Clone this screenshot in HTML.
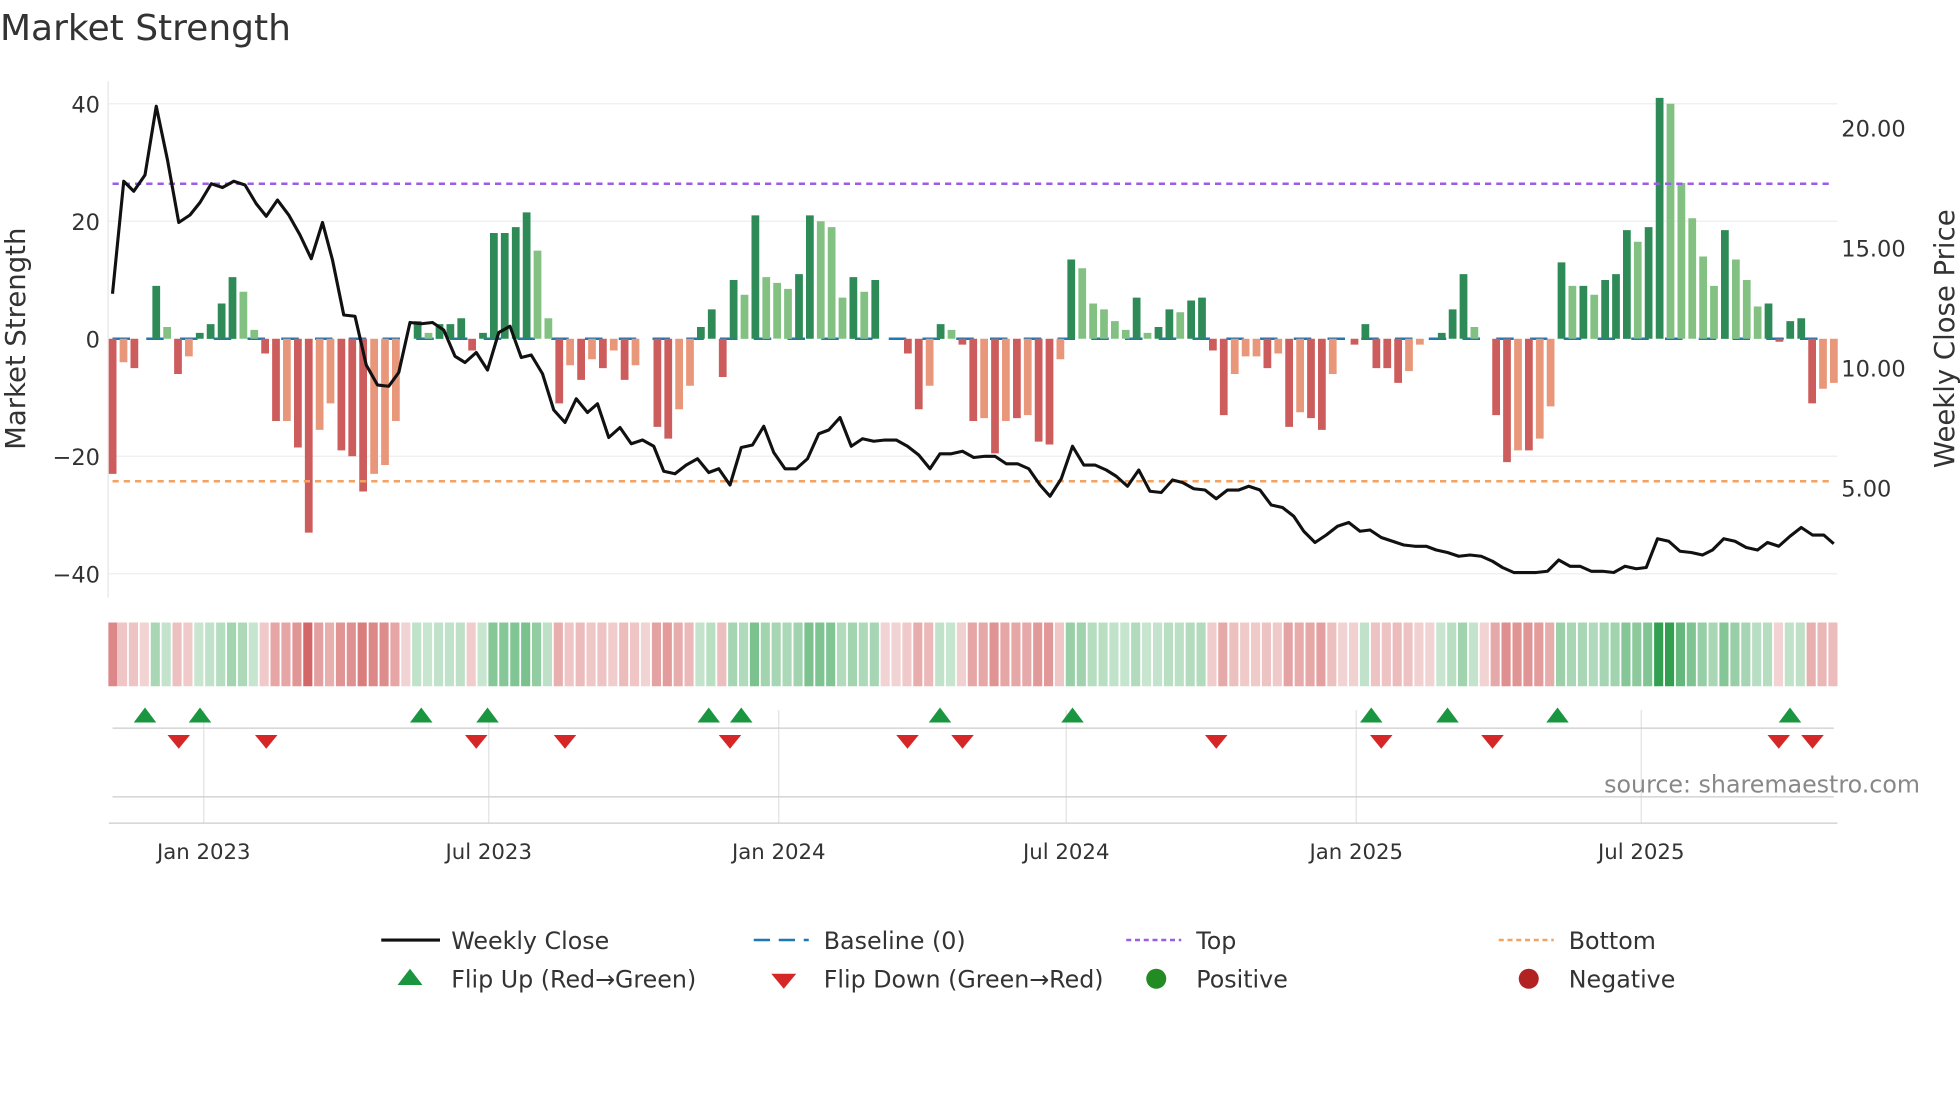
<!DOCTYPE html>
<html><head><meta charset="utf-8"><style>
html,body{margin:0;padding:0;background:#fff;overflow:hidden}
svg{display:block;font-family:"DejaVu Sans","Liberation Sans",sans-serif}
</style></head><body>
<svg id="s" width="1960" height="1102" viewBox="0 0 1568 881.6" xmlns="http://www.w3.org/2000/svg">
<text x="0" y="32" font-size="28.8" fill="#333">Market Strength</text>
<g stroke="#eceef2" stroke-width="1">
<line x1="87" y1="83" x2="1470" y2="83"/><line x1="87" y1="177" x2="1470" y2="177"/>
<line x1="87" y1="365" x2="1470" y2="365"/><line x1="87" y1="459" x2="1470" y2="459"/>
</g>
<line x1="86.5" y1="65" x2="86.5" y2="478" stroke="#e6e6e6"/>
<g font-size="18" fill="#333" text-anchor="end">
<text x="80" y="90">40</text><text x="80" y="184">20</text><text x="80" y="278">0</text>
<text x="80" y="372">−20</text><text x="80" y="466">−40</text>
</g>
<g font-size="18" fill="#333">
<text x="1473" y="109">20.00</text><text x="1473" y="205">15.00</text>
<text x="1473" y="301">10.00</text><text x="1473" y="397">5.00</text>
</g>
<text transform="translate(20,271) rotate(-90)" font-size="22" fill="#333" text-anchor="middle">Market Strength</text>
<text transform="translate(1563,271) rotate(-90)" font-size="22" fill="#333" text-anchor="middle">Weekly Close Price</text>
<line x1="90" y1="271" x2="1467" y2="271" stroke="#1f77b4" stroke-width="2" stroke-dasharray="14 13"/>
<g id="bars"></g>
<line x1="90" y1="147" x2="1467" y2="147" stroke="#9b5de5" stroke-width="2" stroke-dasharray="5 4"/>
<line x1="90" y1="385" x2="1467" y2="385" stroke="#f4a261" stroke-width="2" stroke-dasharray="5 4"/>
<polyline id="price" fill="none" stroke="#111" stroke-width="2.5" stroke-linejoin="round"/>
<g id="heat"></g>
<g stroke="#e3e3e3" stroke-width="1">
<line x1="163" y1="568" x2="163" y2="658"/><line x1="391" y1="568" x2="391" y2="658"/>
<line x1="623" y1="568" x2="623" y2="658"/><line x1="853" y1="568" x2="853" y2="658"/>
<line x1="1085" y1="568" x2="1085" y2="658"/><line x1="1313" y1="568" x2="1313" y2="658"/>
</g>
<line x1="90" y1="582.5" x2="1467" y2="582.5" stroke="#ccc"/>
<line x1="90" y1="637.5" x2="1467" y2="637.5" stroke="#ccc"/>
<line x1="87" y1="658.5" x2="1470" y2="658.5" stroke="#ccc"/>
<g id="marks"></g>
<text x="1536" y="634" font-size="19" fill="#888" text-anchor="end">source: sharemaestro.com</text>
<g font-size="17" fill="#333" text-anchor="middle">
<text x="163" y="687">Jan 2023</text><text x="391" y="687">Jul 2023</text>
<text x="623" y="687">Jan 2024</text><text x="853" y="687">Jul 2024</text>
<text x="1085" y="687">Jan 2025</text><text x="1313" y="687">Jul 2025</text>
</g>
<g font-size="19" fill="#333">
<line x1="305" y1="752" x2="352" y2="752" stroke="#111" stroke-width="2.5"/>
<text x="361" y="759">Weekly Close</text>
<line x1="603" y1="752" x2="647" y2="752" stroke="#1f77b4" stroke-width="2" stroke-dasharray="13 7"/>
<text x="659" y="759">Baseline (0)</text>
<line x1="901" y1="752" x2="945" y2="752" stroke="#9b5de5" stroke-width="2" stroke-dasharray="4 3"/>
<text x="957" y="759">Top</text>
<line x1="1199" y1="752" x2="1243" y2="752" stroke="#f4a261" stroke-width="2" stroke-dasharray="4 3"/>
<text x="1255" y="759">Bottom</text>
<polygon points="328,775 338,788 318,788" fill="#1a9641"/>
<text x="361" y="790">Flip Up (Red→Green)</text>
<polygon points="617,779 637,779 627,791" fill="#d62728"/>
<text x="659" y="790">Flip Down (Green→Red)</text>
<circle cx="925" cy="783" r="8" fill="#228b22"/>
<text x="957" y="790">Positive</text>
<circle cx="1223" cy="783" r="8" fill="#b22222"/>
<text x="1255" y="790">Negative</text>
</g>
</svg>
<script>
var D="-23 -4l -5 0 9 2l -6 -3l 1 2.5 6 10.5 8l 1.5l -2.5 -14 -14l -18.5 -33 -15.5l -11l -19 -20 -26 -23l -21.5l -14l 0 3 1l 2.5 2.5 3.5 -2 1 18 18 19 21.5 15l 3.5l -11 -4.5l -7 -3.5l -5 -2l -7 -4.5l 0 -15 -17 -12l -8l 2 5 -6.5 10 7.5l 21 10.5l 9.5l 8.5l 11 21 20l 19l 7l 10.5 8l 10 0 0 -2.5 -12 -8l 2.5 1.5l -1 -14 -13.5l -19.5 -14l -13.5 -13l -17.5 -18 -3.5l 13.5 12l 6l 5l 3l 1.5l 7 1l 2 5 4.5l 6.5 7 -2 -13 -6l -3l -3l -5 -2.5l -15 -12.5l -13.5 -15.5 -6l 0 -1 2.5 -5 -5 -7.5 -5.5l -1l 0 1 5 11 2l 0 -13 -21 -19l -19 -17l -11.5l 13 9l 9 7.5l 10 11 18.5 16.5l 19 41 40l 26.5l 20.5l 14l 9l 18.5 13.5l 10l 5.5l 6 -0.5 3 3.5 -11 -8.5l -7.5l".split(" ");
var n=D.length,sp=(1467-90)/(n-1),b="",h="";
for(var i=0;i<n;i++){var s=D[i],l=s.indexOf("l")>=0,v=parseFloat(s),x=90+i*sp;
 if(v!==0){var y=v>0?271-v*4.7:271,ht=Math.abs(v)*4.7;
  var c=v>0?(l?"#82c182":"#2e8b57"):(l?"#e9977a":"#cd5c5c");
  b+='<rect x="'+(x-3).toFixed(1)+'" y="'+y.toFixed(1)+'" width="6.2" height="'+Math.max(ht,1.5).toFixed(1)+'" fill="'+c+'"/>';}
 var a=Math.min(1,0.25+Math.abs(v)/40*0.75);
 var hc=v>=0?"rgba(50,160,80,"+a.toFixed(2)+")":"rgba(205,80,80,"+a.toFixed(2)+")";
 if(v===0)hc="rgba(205,80,80,0.25)";
 h+='<rect x="'+(x-4.3+ (i==0?1:0)).toFixed(1)+'" y="498" width="'+(sp-1.4).toFixed(1)+'" height="51" fill="'+hc+'"/>';}
document.getElementById("bars").innerHTML=b;document.getElementById("heat").innerHTML=h;
var P="90,235 99,145 107,153 116,140 125,85 134,128 143,178 152,172 160,162 169,147 178,150 187,145 196,148 205,163 213,173 222,160 231,172 240,188 249,207 258,178 266,208 275,252 284,253 293,292 302,308 311,309 319,298 328,258 337,259 346,258 355,264 364,285 372,290 381,282 390,296 399,266 408,261 417,286 425,284 434,299 443,328 452,338 461,319 470,330 478,323 487,350 496,342 505,355 514,352 523,357 531,377 540,379 549,372 558,367 567,378 575,375 584,388 593,358 602,356 611,341 619,362 628,375 637,375 646,367 655,347 663,344 672,334 681,357 690,351 699,353 708,352 717,352 726,357 735,364 744,375 752,363 761,363 770,361 779,366 788,365 796,365 805,371 814,371 823,375 832,388 840,397 849,383 858,357 867,372 876,372 885,376 893,381 902,389 911,376 920,393 929,394 938,384 946,386 955,391 964,392 973,399 982,392 991,392 999,389 1008,392 1017,404 1026,406 1035,413 1043,425 1052,434 1061,428 1070,421 1079,418 1088,425 1096,424 1105,430 1114,433 1123,436 1132,437 1141,437 1149,440 1158,442 1167,445 1176,444 1185,445 1194,449 1202,454 1211,458 1220,458 1229,458 1238,457 1247,448 1256,453 1264,453 1273,457 1282,457 1291,458 1300,453 1309,455 1317,454 1326,431 1335,433 1344,441 1353,442 1362,444 1370,440 1379,431 1388,433 1397,438 1406,440 1414,434 1423,437 1432,429 1441,422 1450,428 1459,428 1467,435";
document.getElementById("price").setAttribute("points",P);
var up=[116,160,337,390,567,593,752,858,1097,1158,1246,1432],dn=[143,213,381,452,584,726,770,973,1105,1194,1423,1450],m="";
up.forEach(function(x){m+='<polygon points="'+x+',566 '+(x+9)+',578 '+(x-9)+',578" fill="#1a9641"/>';});
dn.forEach(function(x){m+='<polygon points="'+(x-9)+',588 '+(x+9)+',588 '+x+',599" fill="#d62728"/>';});
document.getElementById("marks").innerHTML=m;
</script>
</body></html>
